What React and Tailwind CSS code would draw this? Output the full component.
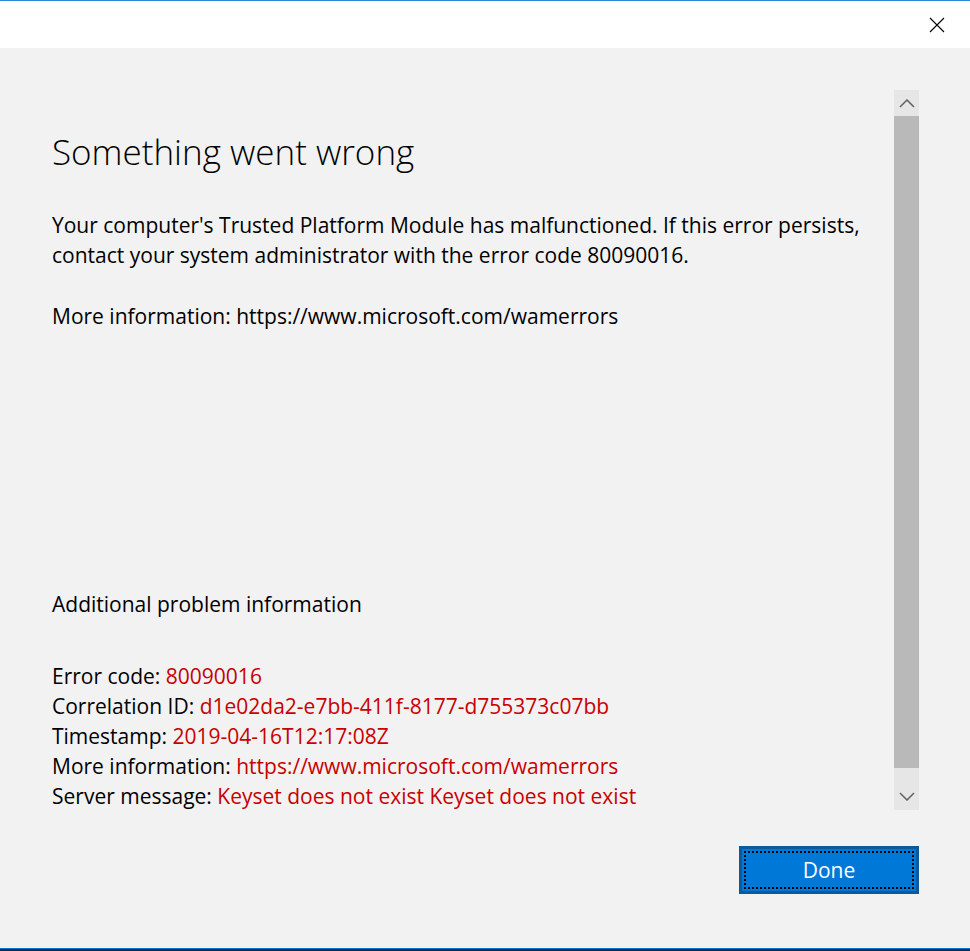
import React from 'react';

const details = [
  ['Error code:', '80090016'],
  ['Correlation ID:', 'd1e02da2-e7bb-411f-8177-d755373c07bb'],
  ['Timestamp:', '2019-04-16T12:17:08Z'],
  ['More information:', 'https://www.microsoft.com/wamerrors'],
  ['Server message:', 'Keyset does not exist Keyset does not exist'],
];

function Chevron({ up }) {
  return (
    <svg width="16" height="9" viewBox="0 0 16 9" className="block">
      <polyline
        points={up ? '1,8 8,1 15,8' : '1,1 8,8 15,1'}
        fill="none"
        stroke="#606060"
        strokeWidth="1.5"
      />
    </svg>
  );
}

export default function App() {
  return (
    <div
      className="w-[970px] h-[951px] flex flex-col bg-[#f2f2f2] text-black"
      style={{ fontFamily: '"Open Sans", "Noto Sans", sans-serif' }}
    >
      <div className="h-px bg-[#2b88d8]" />
      {/* title bar */}
      <div className="h-[47px] bg-white flex items-center justify-end pr-[25px]">
        <svg width="16" height="16" viewBox="0 0 16 16">
          <path d="M1 1L15 15M15 1L1 15" stroke="#000" strokeWidth="1.1" />
        </svg>
      </div>

      {/* body */}
      <div className="flex-1 flex flex-col">
        <div className="flex pt-[42px]">
          <div className="flex-1 pl-[52px]">
            <h1 className="mt-[42px] text-[35px] leading-[40px] font-light">Something went wrong</h1>
            <p className="mt-[38px] text-[21px] leading-[30px]">
              Your computer's Trusted Platform Module has malfunctioned. If this error persists,
              <br />
              contact your system administrator with the error code 80090016.
            </p>
            <p className="mt-[31px] text-[21px] leading-[30px]">
              More information: https://www.microsoft.com/wamerrors
            </p>
            <p className="mt-[258px] text-[21px] leading-[30px]">Additional problem information</p>
            <div className="mt-[42px] text-[21px] leading-[30px]">
              {details.map(([k, v]) => (
                <div key={k}>
                  {k} <span className="text-[#c80000]">{v}</span>
                </div>
              ))}
            </div>
          </div>

          {/* scrollbar */}
          <div className="w-[25px] h-[720px] mr-[51px] bg-[#e6e6e6] flex flex-col">
            <div className="h-[26px] flex items-center justify-center">
              <Chevron up />
            </div>
            <div className="h-[652px] bg-[#b9b9b9]" />
            <div className="flex-1 flex items-end justify-center pb-[9px]">
              <Chevron />
            </div>
          </div>
        </div>

        <div className="flex justify-end pr-[51px] mt-auto mb-[54px]">
          <button className="w-[180px] h-[48px] border-[3px] border-[#0a5a9c] bg-[#0078d7] p-[2px]">
            <div className="w-full h-full border-2 border-dotted border-black bg-[#0078d7] flex items-center justify-center pt-[2px] text-white text-[21px]">
              Done
            </div>
          </button>
        </div>
      </div>

      <div className="h-px bg-[#0078d7]" />
      <div className="h-[2px] bg-[#0c2a47]" />
    </div>
  );
}
